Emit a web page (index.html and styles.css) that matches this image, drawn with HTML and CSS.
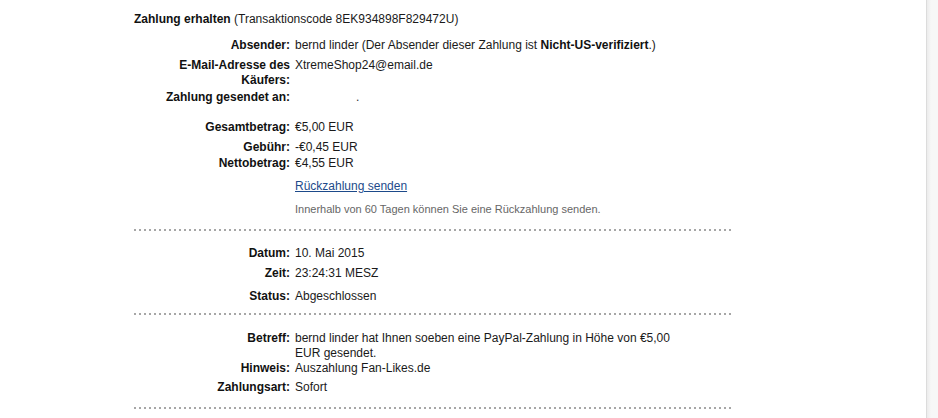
FILE: index.html
```html
<!DOCTYPE html>
<html lang="de">
<head>
<meta charset="utf-8">
<link rel="stylesheet" href="styles.css">
</head>
<body>
<div class="page">
  <main class="content">
    <h1 class="title"><strong>Zahlung erhalten</strong> (Transaktionscode 8EK934898F829472U)</h1>

    <section class="block first">
      <div class="row r-absender"><div class="lbl">Absender:</div><div class="val">bernd linder (Der Absender dieser Zahlung ist <strong>Nicht-US-verifiziert</strong>.)</div></div>
      <div class="row r-email"><div class="lbl">E-Mail-Adresse des Käufers:</div><div class="val">XtremeShop24@email.de</div></div>
      <div class="row r-to"><div class="lbl">Zahlung gesendet an:</div><div class="val"><span class="blur">.</span></div></div>
      <div class="row r-total"><div class="lbl">Gesamtbetrag:</div><div class="val">€5,00 EUR</div></div>
      <div class="row r-fee"><div class="lbl">Gebühr:</div><div class="val">-€0,45 EUR</div></div>
      <div class="row r-net"><div class="lbl">Nettobetrag:</div><div class="val">€4,55 EUR</div></div>
      <div class="row r-link"><div class="lbl"></div><div class="val"><a href="#" class="link">Rückzahlung senden</a></div></div>
      <div class="row r-note"><div class="lbl"></div><div class="val note">Innerhalb von 60 Tagen können Sie eine Rückzahlung senden.</div></div>
    </section>
    <div class="dots"></div>

    <section class="block">
      <div class="row r-date"><div class="lbl">Datum:</div><div class="val">10. Mai 2015</div></div>
      <div class="row r-time"><div class="lbl">Zeit:</div><div class="val">23:24:31 MESZ</div></div>
      <div class="row r-status"><div class="lbl">Status:</div><div class="val">Abgeschlossen</div></div>
    </section>
    <div class="dots d2"></div>

    <section class="block">
      <div class="row r-subj"><div class="lbl">Betreff:</div><div class="val">bernd linder hat Ihnen soeben eine PayPal-Zahlung in Höhe von €5,00 EUR gesendet.</div></div>
      <div class="row r-hint"><div class="lbl">Hinweis:</div><div class="val">Auszahlung Fan-Likes.de</div></div>
      <div class="row r-type"><div class="lbl">Zahlungsart:</div><div class="val">Sofort</div></div>
    </section>
    <div class="dots d3"></div>
  </main>
  <aside class="side"></aside>
</div>
</body>
</html>
```

FILE: styles.css
```css
html, body {
  margin: 0;
  padding: 0;
  background: #fff;
}
body {
  font-family: "Liberation Sans", Arial, sans-serif;
  font-size: 12px;
  line-height: 15px;
  color: #1a1a1a;
}
.page {
  display: flex;
  height: 418px;
  overflow: hidden;
}
.content {
  flex: 1;
  padding-left: 134px;
  padding-top: 12px;
}
.side {
  width: 11px;
  border-left: 1px solid #dcdcdc;
  background: linear-gradient(to right, #ececec, #f7f7f7 4px, #f7f7f7);
}
.title {
  margin: 0;
  font-size: 12px;
  font-weight: normal;
  line-height: 15px;
  color: #1a1a1a;
}
.title strong { color: #111; }
.block {
  width: 600px;
}
.row {
  display: grid;
  grid-template-columns: 156px 395px;
  column-gap: 5px;
}
.lbl {
  text-align: right;
  font-weight: bold;
  color: #111;
}
.val strong { color: #111; }
.r-absender { margin-top: 11px; }
.r-email { margin-top: 5px; }
.r-to { margin-top: 2px; }
.r-total { margin-top: 15px; }
.r-fee { margin-top: 5px; }
.r-net { margin-top: 1px; }
.r-link { margin-top: 8px; }
.r-note { margin-top: 8px; }
.link {
  color: #1d4a8a;
  text-decoration: underline;
}
.note {
  font-size: 11px;
  color: #666;
}
.blur {
  display: inline-block;
  margin-left: 61px;
  color: #333;
}
.dots {
  width: 600px;
  height: 2px;
  margin-top: 12px;
  background: repeating-linear-gradient(to right, #a6a6a6 0 2px, transparent 2px 5px);
}
.r-date { margin-top: 15px; }
.r-time { margin-top: 5px; }
.r-status { margin-top: 8px; }
.d2 { margin-top: 9px; }
.r-subj { margin-top: 16px; }
.r-hint { margin-top: 0; }
.r-type { margin-top: 4px; }
.d3 { margin-top: 12px; }
```
